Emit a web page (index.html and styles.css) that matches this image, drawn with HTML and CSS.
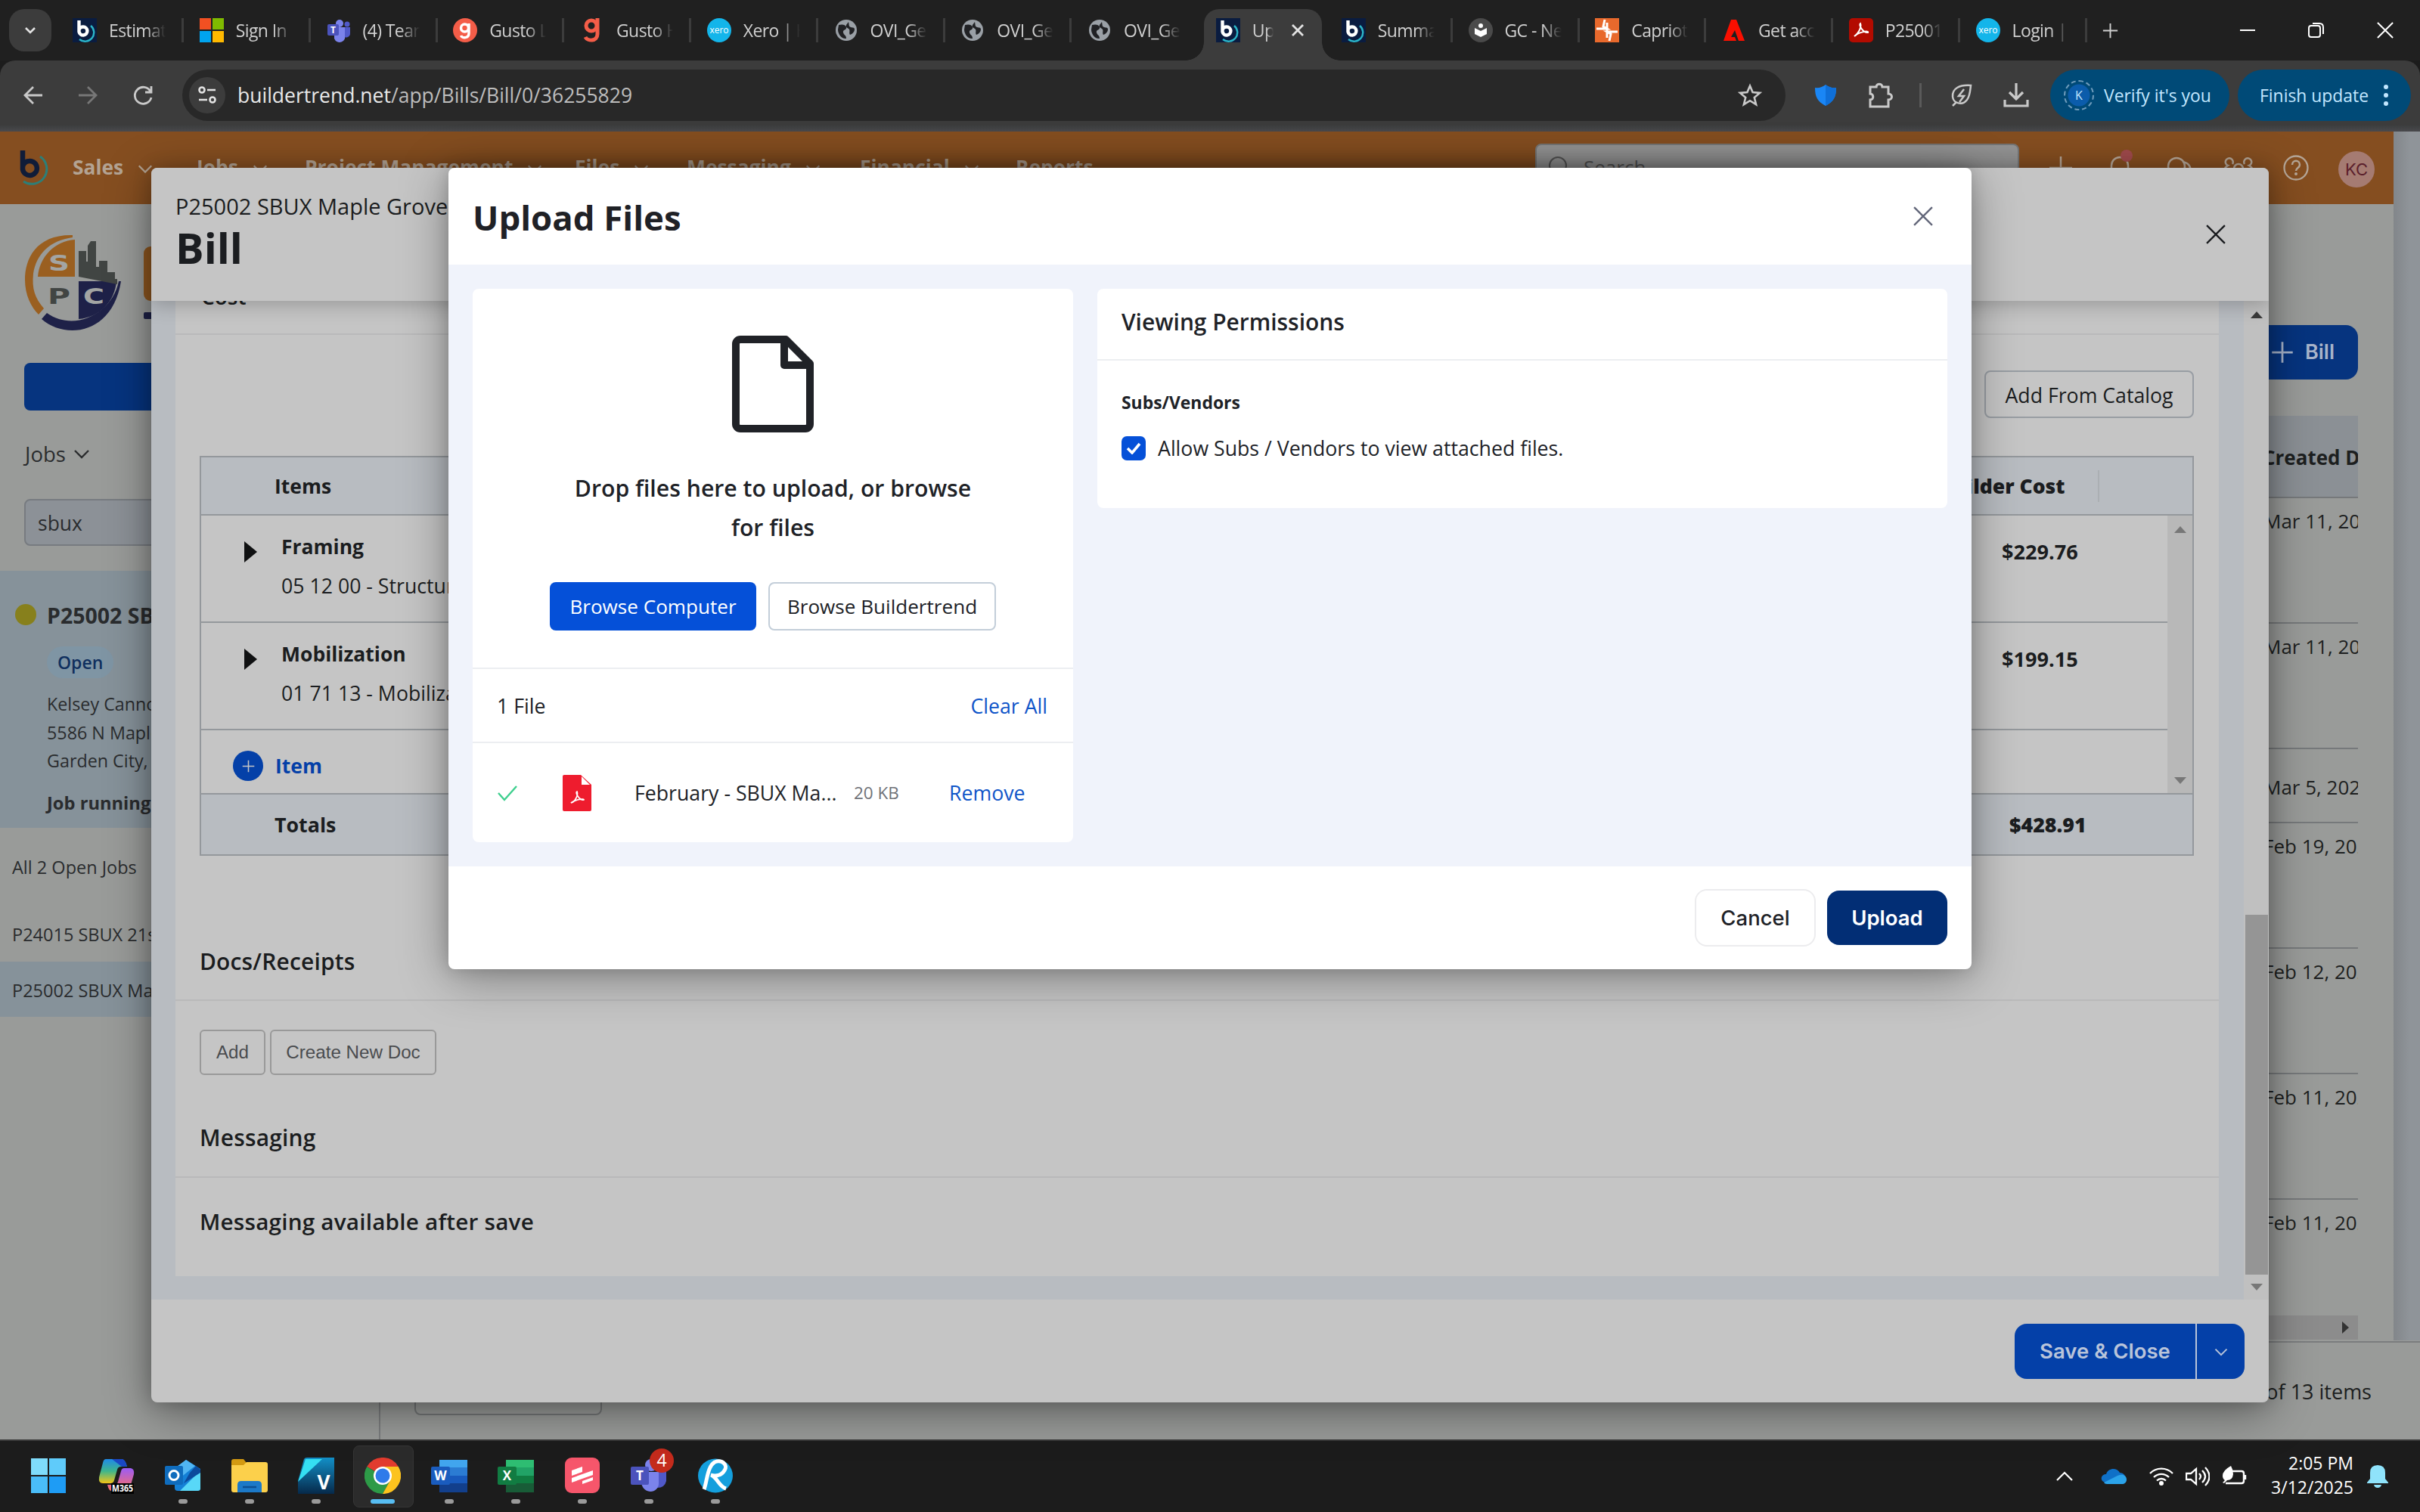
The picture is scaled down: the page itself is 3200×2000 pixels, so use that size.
FILE: index.html
```html
<!DOCTYPE html>
<html lang="en">
<head>
<meta charset="utf-8">
<title>Upload Files</title>
<link rel="stylesheet" href="styles.css">
</head>
<body>
<svg class="defs" width="0" height="0" aria-hidden="true">
  <symbol id="bt" viewBox="0 0 32 32"><rect width="32" height="32" fill="#0a1c40"/><path d="M24 10a11 11 0 0 1-15 18" fill="none" stroke="#2bb6c9" stroke-width="2.4"/><path d="M8.500 3v15a5.500 5.500 0 1 0 5.500-6.500c-2.500 0-5 1.500-5.500 4" fill="none" stroke="#fff" stroke-width="4.400"/></symbol>
  <symbol id="globe" viewBox="0 0 32 32"><circle cx="16" cy="16" r="14" fill="#9aa0a6"/><path d="M6 9c4-1 9-1 10 3s-5 3-4 7 4 3 4 8c-6 1-11-6-11-12zM19 5c1 4 0 6 3 7s5 0 5 3-3 6-6 7c-2-3 1-6-2-8s-4-2-3-5z" fill="#202124"/></symbol>
  <symbol id="xero" viewBox="0 0 32 32"><circle cx="16" cy="16" r="16" fill="#13b5ea"/><text x="16" y="20" font-size="12" text-anchor="middle" fill="#fff" font-family="Open Sans">xero</text></symbol>
  <symbol id="chev" viewBox="0 0 24 24"><path d="M3 8l9 9 9-9" fill="none" stroke="currentColor" stroke-width="2.400"/></symbol>
  <symbol id="x" viewBox="0 0 24 24"><path d="M1 1l22 22M23 1L1 23" fill="none" stroke="currentColor" stroke-width="2.200"/></symbol>
  <symbol id="plus" viewBox="0 0 24 24"><path d="M12 1v22M1 12h22" fill="none" stroke="currentColor" stroke-width="2.200"/></symbol>
</svg>

<div class="screen">
  <div class="tabs">
    <div class="tablist"><svg width="18" height="18"><path d="M3 6l6 6 6-6" fill="none" stroke="#e3e3e3" stroke-width="2.600"/></svg></div>
    <div class="tab"><svg class="fav"><use href="#bt"/></svg><span>Estimates</span></div>
    <div class="tab"><svg class="fav" viewBox="0 0 32 32"><path d="M0 0h15v15H0z" fill="#f25022"/><path d="M17 0h15v15H17z" fill="#7fba00"/><path d="M0 17h15v15H0z" fill="#00a4ef"/><path d="M17 17h15v15H17z" fill="#ffb900"/></svg><span>Sign In |</span></div>
    <div class="tab"><svg class="fav" viewBox="0 0 32 32"><circle cx="17" cy="7" r="5" fill="#7b83eb"/><circle cx="27" cy="8" r="3.500" fill="#5059c9"/><path d="M10 12h14v10a7 7 0 0 1-14 5z" fill="#7b83eb"/><path d="M24 12h7v8a5 5 0 0 1-7 5z" fill="#5059c9"/><rect x="1" y="8" width="15" height="15" rx="2" fill="#4b53bc"/><text x="8.500" y="20" font-size="12" font-weight="700" text-anchor="middle" fill="#fff" font-family="Open Sans">T</text></svg><span>(4) Teams</span></div>
    <div class="tab"><svg class="fav" viewBox="0 0 32 32"><circle cx="16" cy="16" r="16" fill="#f45d48"/><g fill="none" stroke="#fff" stroke-width="3.500"><circle cx="15.500" cy="13" r="5"/><path d="M21 7v13c0 7-9 7-10.500 3"/></g></svg><span>Gusto Lo</span></div>
    <div class="tab"><svg class="fav" viewBox="0 0 32 32"><g fill="none" stroke="#f45d48" stroke-width="5"><circle cx="15" cy="10" r="7"/><path d="M23 0v21c0 10-13 10-16 4"/></g></svg><span>Gusto Ho</span></div>
    <div class="tab"><svg class="fav"><use href="#xero"/></svg><span>Xero | Ho</span></div>
    <div class="tab"><svg class="fav"><use href="#globe"/></svg><span>OVI_Gen</span></div>
    <div class="tab"><svg class="fav"><use href="#globe"/></svg><span>OVI_Gen</span></div>
    <div class="tab nosep"><svg class="fav"><use href="#globe"/></svg><span>OVI_Gen</span></div>
    <div class="tab active"><svg class="fav"><use href="#bt"/></svg><span class="short">Upload</span><svg class="tabx" width="18" height="18" viewBox="0 0 18 18"><path d="M2 2l14 14M16 2L2 16" stroke="#e3e3e3" stroke-width="2.800"/></svg></div>
    <div class="tab"><svg class="fav"><use href="#bt"/></svg><span>Summary</span></div>
    <div class="tab"><svg class="fav" viewBox="0 0 32 32"><circle cx="16" cy="16" r="16" fill="#4a4a4a"/><circle cx="16" cy="10" r="3" fill="#fff"/><path d="M8 13l8 4 8-4v8l-8 4-8-4z" fill="#fff"/></svg><span>GC - New</span></div>
    <div class="tab"><svg class="fav" viewBox="0 0 32 32"><rect width="32" height="32" fill="#e8692c"/><path d="M13 2l-2 9 5 3H2M19 30l2-9-5-3h14M16 6v20" fill="none" stroke="#fff" stroke-width="3"/></svg><span>Capriotti</span></div>
    <div class="tab"><svg class="fav" viewBox="0 0 32 32"><path d="M12 2h7l11 28h-8l-5-14-5 9h5l2 5H2z" fill="#fa0f00"/></svg><span>Get acce</span></div>
    <div class="tab"><svg class="fav" viewBox="0 0 32 32"><rect width="32" height="32" rx="5" fill="#b30b00"/><path d="M7 24c5-3 10-12 8-17-3 2 4 13 10 12 2-3-12-1-18 5z" fill="none" stroke="#fff" stroke-width="2"/></svg><span>P25001 B</span></div>
    <div class="tab"><svg class="fav"><use href="#xero"/></svg><span>Login | X</span></div>
    <div class="newtab"><svg width="21" height="21"><use href="#plus"/></svg></div>
    <div class="wincontrols">
      <svg width="22" height="22"><path d="M1 11h20" stroke="#fff" stroke-width="2"/></svg>
      <svg width="22" height="22"><g fill="none" stroke="#fff" stroke-width="2"><rect x="1" y="5" width="15" height="15" rx="3"/><path d="M6 2h9q5 0 5 5v9"/></g></svg>
      <svg class="winx" width="22" height="22"><use href="#x"/></svg>
    </div>
  </div>

  <div class="toolbar">
    <div class="navbtns">
      <svg width="26" height="26"><path d="M25 13H3M13 2L2 13l11 11" fill="none" stroke="#c9c9c9" stroke-width="2.800"/></svg>
      <svg width="26" height="26"><path d="M1 13h22M13 2l11 11-11 11" fill="none" stroke="#777" stroke-width="2.800"/></svg>
      <svg width="28" height="28"><path d="M24 9A11 11 0 1 0 25 17M25 2v8h-8" fill="none" stroke="#c9c9c9" stroke-width="2.800"/></svg>
    </div>
    <div class="omnibox">
      <div class="siteinfo"><svg width="26" height="26"><g fill="none" stroke="#e3e3e3" stroke-width="2.600"><circle cx="6" cy="6" r="3.500"/><path d="M13 6h11M2 19h11"/><circle cx="20" cy="19" r="3.500"/></g></svg></div>
      <div class="url">buildertrend.net<span>/app/Bills/Bill/0/36255829</span></div>
      <svg class="star" width="32" height="32"><path d="M16 3.500l3.600 8.600 9.400.8-7.200 6.100 2.300 9.200-8.100-5-8.100 5 2.300-9.200L3 12.900l9.400-.8z" fill="none" stroke="#c9c9c9" stroke-width="2.600"/></svg>
    </div>
    <div class="exts">
      <svg width="32" height="32"><path d="M16 2q6 5 14 4c0 12-3 18-14 24C5 24 2 18 2 6q8 1 14-4z" fill="#1a86f5"/><path d="M16 2q6 5 14 4c0 12-3 18-14 24z" fill="#0f6fd8"/></svg>
      <svg width="34" height="36"><path d="M3 7h8c0-5 8-5 8 0h8v9c6 0 6 8 0 8v9H3v-9c5 0 5-8 0-8z" fill="none" stroke="#c9c9c9" stroke-width="3"/></svg>
      <i class="vsep"></i>
      <svg width="34" height="34"><path d="M29 4C14 3 4 8 5 19c1 9 13 12 19 4 4-5 4-11 5-19zM5 31l5-5M20 9l-7 9h7l-6 8" fill="none" stroke="#c9c9c9" stroke-width="2.500"/></svg>
      <svg width="34" height="34"><path d="M17 1v20M8 13l9 9 9-9M2 23v8h30v-8" fill="none" stroke="#c9c9c9" stroke-width="3.200"/></svg>
    </div>
    <div class="pill verify"><div class="vk">K</div>Verify it's you</div>
    <div class="pill finish">Finish update<svg width="8" height="30"><circle cx="4" cy="4" r="3" fill="#c2e7ff"/><circle cx="4" cy="15" r="3" fill="#c2e7ff"/><circle cx="4" cy="26" r="3" fill="#c2e7ff"/></svg></div>
  </div>
  <div class="edge"></div>

  <div class="page">
    <div class="app">
      <div class="apphead">
        <svg class="blogo" width="40" height="48"><path d="M28 9a18 18 0 0 1-22 33" fill="none" stroke="#2c7f78" stroke-width="3"/><path d="M5 1v25a9.500 9.500 0 1 0 9.500-11c-4 0-8 2-9.500 7" fill="none" stroke="#101c38" stroke-width="6.500"/></svg>
        <nav>
          <span class="n1">Sales<svg><use href="#chev"/></svg></span><span class="n2">Jobs<svg><use href="#chev"/></svg></span><span class="n3">Project Management<svg><use href="#chev"/></svg></span><span class="n4">Files<svg><use href="#chev"/></svg></span><span class="n5">Messaging<svg><use href="#chev"/></svg></span><span class="n6">Financial<svg><use href="#chev"/></svg></span><span>Reports</span>
        </nav>
        <div class="search"><svg width="26" height="28"><circle cx="12" cy="12" r="11" fill="none" stroke="#555" stroke-width="2"/><path d="M20 20l6 7" stroke="#555" stroke-width="2"/></svg>Search</div>
        <div class="headicons">
          <svg width="30" height="30"><path d="M15 0v30M0 15h30" stroke="currentColor" stroke-width="2.500"/></svg>
          <svg width="34" height="44"><g fill="none" stroke="currentColor" stroke-width="2.500"><path d="M6 32V22a11 11 0 0 1 22 0v10H6"/></g><circle cx="26" cy="9" r="8" fill="#a04a4c"/></svg>
          <svg width="36" height="34"><g fill="none" stroke="currentColor" stroke-width="2.500"><circle cx="14" cy="15" r="11"/><path d="M22 9c7 1 12 6 10 14"/></g></svg>
          <svg width="40" height="34"><g fill="none" stroke="currentColor" stroke-width="2.500"><path d="M12 12a5 5 0 1 0-6 2q-4 2-5 6M28 12a5 5 0 1 1 6 2q4 2 5 6"/><circle cx="20" cy="18" r="6"/></g></svg>
          <svg width="34" height="34"><circle cx="17" cy="17" r="15.500" fill="none" stroke="currentColor" stroke-width="2.300"/><path d="M12 13c0-7 10-7 10 0 0 4-5 4-5 8" fill="none" stroke="currentColor" stroke-width="2.500"/><circle cx="17" cy="25" r="2" fill="currentColor"/></svg>
          <div class="avatar">KC</div>
        </div>
      </div>
      <div class="appbody">
        <aside>
          <svg class="spc" width="200" height="160"><path d="M96 21C48 20 33 52 33 80c0 20 8 36 18 46l7-8C46 104 42 92 44 72 48 46 66 28 96 24z" fill="#9a5f20"/><path d="M99 27v49H50c2-26 22-47 49-49z" fill="#9a5f20"/><path d="M62 124l-7 8c32 28 94 20 105-50h-3c-8 42-58 68-95 42z" fill="#1e2148"/><path d="M104 82h50c-2 26-22 48-50 50z" fill="#1e2148"/><path d="M104 76V42h10v14h2V35l4-6h7v34h4v-8h11v15h10v9h3v-3 10z" fill="#414543"/><g font-family="DejaVu Sans" font-weight="700" font-size="28" text-anchor="middle"><text x="78" y="68" fill="#a3a5a3" textLength="28" lengthAdjust="spacingAndGlyphs">S</text><text x="78" y="112" fill="#414543" textLength="30" lengthAdjust="spacingAndGlyphs">P</text><text x="124" y="112" fill="#a3a5a3" textLength="28" lengthAdjust="spacingAndGlyphs">C</text></g><rect x="190" y="36" width="30" height="72" rx="9" fill="#8f5720"/><rect x="190" y="123" width="30" height="9" rx="2" fill="#1e2148"/></svg>
          <div class="bluebtn"></div>
          <div class="jobsdd">Jobs<svg width="24" height="24"><use href="#chev"/></svg></div>
          <div class="jobinput">sbux</div>
          <div class="jobcard">
            <i class="dot"></i>
            <div class="jobinfo"><b class="jt">P25002 SBUX</b><span class="openpill">Open</span><p>Kelsey Cannon</p><p>5586 N Maple</p><p>Garden City, ID</p><b class="jr">Job running</b></div>
          </div>
          <div class="all">All 2 Open Jobs</div>
          <div class="j1">P24015 SBUX 21st</div>
          <div class="j2">P25002 SBUX Map</div>
        </aside>
        <main>
          <div class="addbill"><svg width="30" height="30"><use href="#plus"/></svg>Bill</div>
          <div class="grid">
            <div class="gh">Created Date</div>
            <div class="gr a">Mar 11, 2025</div><div class="gr a">Mar 11, 2025</div><div class="gr b">Mar 5, 2025</div><div class="gr a">Feb 19, 2025</div><div class="gr a">Feb 12, 2025</div><div class="gr a">Feb 11, 2025</div><div class="gr a last">Feb 11, 2025</div>
            <div class="hscroll"><svg width="9" height="16"><path d="M0 0l9 8-9 8z" fill="#333"/></svg></div>
          </div>
        </main>
      </div>
      <div class="pagefoot"><div class="selbox"></div><span>of 13 items</span></div>
    </div>
    <div class="gutter"></div>
  </div>

  <section class="bill">
    <header><div class="bjob">P25002 SBUX Maple Grove</div><div class="btitle">Bill</div><svg class="bx" width="26" height="26"><use href="#x"/></svg></header>
    <div class="bscroll">
      <div class="bcontent">
        <div class="cost"><span>Cost</span></div>
        <div class="catrow"><div class="catbtn">Add From Catalog</div></div>
        <div class="tbl">
          <div class="th"><span>Items</span><b>Builder Cost</b><i></i></div>
          <div class="tbody">
            <div class="trows">
              <div class="tr"><svg width="18" height="28"><path d="M0 0l17 14L0 28z" fill="#101112"/></svg><div class="tx"><b>Framing</b><span>05 12 00 - Structural</span></div><b class="amt">$229.76</b></div>
              <div class="tr"><svg width="18" height="28"><path d="M0 0l17 14L0 28z" fill="#101112"/></svg><div class="tx"><b>Mobilization</b><span>01 71 13 - Mobilization</span></div><b class="amt">$199.15</b></div>
              <div class="additem"><div class="circ"><svg width="17" height="17"><use href="#plus"/></svg></div>Item</div>
            </div>
            <div class="tscroll"><svg width="16" height="9"><path d="M0 9l8-9 8 9z" fill="#777"/></svg><svg width="16" height="9"><path d="M0 0l8 9 8-9z" fill="#777"/></svg></div>
          </div>
          <div class="tf"><span>Totals</span><b>$428.91</b></div>
        </div>
        <h3 class="docs">Docs/Receipts</h3>
        <div class="docbtns"><div class="dadd">Add</div><div class="dnew">Create New Doc</div></div>
        <h3 class="msg">Messaging</h3>
        <div class="after">Messaging available after save</div>
      </div>
      <div class="vscroll"><svg width="16" height="9"><path d="M0 9l8-9 8 9z" fill="#3a3a3a"/></svg><div class="thumb"></div><svg width="16" height="9"><path d="M0 0l8 9 8-9z" fill="#777"/></svg></div>
    </div>
    <footer><div class="save">Save &amp; Close</div><div class="savedd"><svg width="20" height="20"><use href="#chev"/></svg></div></footer>
  </section>

  <section class="upload">
    <header>Upload Files<svg width="26" height="26"><use href="#x"/></svg></header>
    <div class="ubody">
      <div class="ucard left">
        <div class="drop">
          <svg width="108" height="128"><g fill="none" stroke="#202227" stroke-width="10" stroke-linejoin="round"><path d="M5 11a6 6 0 0 1 6-6h60l32 32v80a6 6 0 0 1-6 6H11a6 6 0 0 1-6-6z"/><path d="M69 5v34h34"/></g></svg>
          <p>Drop files here to upload, or browse<br>for files</p>
          <div class="bbtns"><div class="prim">Browse Computer</div><div class="sec">Browse Buildertrend</div></div>
        </div>
        <div class="count"><span>1 File</span><a>Clear All</a></div>
        <div class="file">
          <svg width="28" height="22"><path d="M2 11l8 9L26 2" fill="none" stroke="#3ecf8e" stroke-width="2.400"/></svg>
          <svg class="pdf" width="38" height="48"><path d="M2 0h22l14 13v33q0 2-2 2H2q-2 0-2-2V2q0-2 2-2z" fill="#ee1c2e"/><path d="M25 2l11 11H25z" fill="#fff"/><path d="M11 37c5-1 10-10 8-15-3 1 3 12 9 11 1-2-11-1-17 4z" fill="none" stroke="#fff" stroke-width="1.700"/></svg>
          <span class="fname">February - SBUX Ma...</span><span class="size">20 KB</span><a>Remove</a>
        </div>
      </div>
      <div class="ucard right">
        <div class="vp">Viewing Permissions</div>
        <div class="sv">Subs/Vendors</div>
        <div class="allow"><i><svg width="20" height="16"><path d="M2 8l6 6L18 2" fill="none" stroke="#fff" stroke-width="3.600"/></svg></i>Allow Subs / Vendors to view attached files.</div>
      </div>
    </div>
    <footer><div class="cancel">Cancel</div><div class="up">Upload</div></footer>
  </section>

  <div class="taskbar">
    <div class="apps">
      <div class="ti"><svg viewBox="0 0 48 48"><path d="M1 1h22v22H1z" fill="#7fdcfb"/><path d="M25 1h22v22H25z" fill="#5fcbfa"/><path d="M1 25h22v22H1z" fill="#4abdf8"/><path d="M25 25h22v22H25z" fill="#1e9cf5"/></svg></div>
      <div class="ti"><svg viewBox="0 0 48 48"><defs><linearGradient id="ga" x1="0" y1="0" x2="0" y2="1"><stop offset="0" stop-color="#1f8ae8"/><stop offset=".5" stop-color="#3fb68b"/><stop offset="1" stop-color="#f3c416"/></linearGradient><linearGradient id="gb" x1="0" y1="0" x2="0" y2="1"><stop offset="0" stop-color="#9b5cf6"/><stop offset="1" stop-color="#ff6f61"/></linearGradient></defs><path d="M10 2h22q4 2 6 10h-8q-4 0-5 4l-4 14q-1 4-5 4H6Q0 34 1 26L6 7q1-5 4-5z" fill="url(#ga)"/><path d="M18 2h14q4 1 6 10h-7z" fill="#1a48c4"/><path d="M34 14h9q5 1 4 8l-4 14q-2 8-8 8H17q-3 0-5-8h8q5 0 6-4l4-14q1-4 4-4z" fill="url(#gb)"/><rect x="17" y="34" width="30" height="14" fill="#000"/><text x="32" y="45" font-size="12" font-weight="700" fill="#fff" text-anchor="middle" font-family="Open Sans" textLength="28" lengthAdjust="spacingAndGlyphs">M365</text></svg></div>
      <div class="ti run"><svg viewBox="0 0 48 48"><path d="M28 3L47 15v25q0 4-4 4H17q-4 0-4-4V15z" fill="#1480d6"/><path d="M28 3l12 8-20 16-7-5v-8z" fill="#50b5f2"/><path d="M47 17v24q0 3-4 3H20z" fill="#58d8f8"/><path d="M33 20l8-9 6 5v4L25 34z" fill="#0c4a9c"/><rect y="11" width="24" height="25" rx="2" fill="#0f6cbd"/><circle cx="12" cy="23.500" r="6" fill="none" stroke="#fff" stroke-width="3"/></svg></div>
      <div class="ti run"><svg viewBox="0 0 48 48"><path d="M0 5q0-3 3-3h13l4 5-4 10H0z" fill="#d39a12"/><path d="M0 10h16l4-4h25q3 0 3 3v34q0 3-3 3H3q-3 0-3-3z" fill="#fcd04b"/><path d="M8 46V36q0-5 5-5h22q5 0 5 5v10z" fill="#1c79c8"/><path d="M15 39h18" stroke="#0d4f92" stroke-width="2.500"/></svg></div>
      <div class="ti run"><svg viewBox="0 0 48 48"><defs><linearGradient id="gv" x1="0" y1="0" x2="0" y2="1"><stop offset="0" stop-color="#1390c8"/><stop offset="1" stop-color="#06294a"/></linearGradient></defs><path d="M8 2Q9 0 12 0h36v48H0V30z" fill="url(#gv)"/><path d="M10 2h22L0 32z" fill="#35dff2"/><text x="34" y="42" font-size="27" font-weight="700" fill="#fff" text-anchor="middle" font-family="Open Sans" textLength="17" lengthAdjust="spacingAndGlyphs">V</text></svg></div>
      <div class="ti run cur"><svg viewBox="0 0 48 48"><path d="M24 24L3.200 12A24 24 0 0 1 44.800 12z" fill="#e23b2e"/><path d="M24 24h-1L3.200 12A24 24 0 0 0 24 48l10-18z" fill="#2d9a47"/><path d="M24 12h20.800A24 24 0 0 1 24 48l10-18z" fill="#fcc31e"/><circle cx="24" cy="24" r="12" fill="#fff"/><circle cx="24" cy="24" r="9.500" fill="#2f7bea"/></svg></div>
      <div class="ti run"><svg viewBox="0 0 48 48"><path d="M11 3h37v11H11z" fill="#41a5ee"/><path d="M11 13h37v11H11z" fill="#2b7cd3"/><path d="M11 24h37v11H11z" fill="#185abd"/><path d="M11 34h37v12H11z" fill="#123f8c"/><rect y="12" width="25" height="24" rx="2" fill="#1a5cbe"/><text x="12.500" y="30" font-size="17" font-weight="700" fill="#fff" text-anchor="middle" font-family="Open Sans">W</text></svg></div>
      <div class="ti run"><svg viewBox="0 0 48 48"><path d="M11 3h37v11H11z" fill="#2ebd72"/><path d="M11 13h37v11H11z" fill="#21a366"/><path d="M11 24h37v11H11z" fill="#107c41"/><path d="M11 34h37v12H11z" fill="#185c37"/><rect y="12" width="25" height="24" rx="2" fill="#117c42"/><text x="12.500" y="30" font-size="17" font-weight="700" fill="#fff" text-anchor="middle" font-family="Open Sans">X</text></svg></div>
      <div class="ti run"><svg viewBox="0 0 48 48"><rect x="1" width="46" height="47" rx="9" fill="#f6566b"/><path d="M10 17l14-5v7l-14 5zM10 27l28-10v6L10 33zM24 31l14-5v4l-14 5z" fill="#fff"/></svg></div>
      <div class="ti run"><svg viewBox="0 0 48 48"><circle cx="27" cy="10" r="8" fill="#7b83eb"/><path d="M34 19h13v12q-2 9-12 9z" fill="#5059c9"/><path d="M14 19h23v15c0 14-20 15-23 0z" fill="#7b83eb"/><rect y="12" width="24" height="24" rx="2" fill="#4b53bc"/><text x="12" y="30" font-size="17" font-weight="700" fill="#fff" text-anchor="middle" font-family="Open Sans">T</text></svg><em>4</em></div>
      <div class="ti run"><svg viewBox="0 0 48 48"><ellipse cx="24" cy="24" rx="23" ry="22.500" fill="#149fdd"/><path d="M9 42c4-10 4-30 14-36 10-4 18 4 13 11-4 7-12 8-18 6 8 2 10 15 20 18" fill="none" stroke="#fff" stroke-width="5"/></svg></div>
    </div>
    <div class="tray">
      <svg width="22" height="14"><path d="M1 12L11 2l10 10" fill="none" stroke="#fff" stroke-width="2.200"/></svg>
      <svg width="34" height="24"><path d="M8 20C-2 20-1 9 7 9c2-8 14-10 18-2 9 0 11 13 2 14z" fill="#0f70c7"/><path d="M4 20l18-9c7-3 12 0 12 5 0 4-3 6-6 6H8q-3 0-4-2z" fill="#2ba3ea"/></svg>
      <svg width="32" height="26"><g fill="none" stroke="#fff" stroke-width="2.300"><path d="M1 9a21 21 0 0 1 30 0M6 14a14 14 0 0 1 20 0M10 18.500a8.500 8.500 0 0 1 12 0"/></g><circle cx="16" cy="22" r="3" fill="#fff"/></svg>
      <svg width="32" height="28"><g fill="none" stroke="#fff" stroke-width="2.300"><path d="M1 10h6l7-6v20l-7-6H1zM18 10q4 4 0 8M22 6q8 8 0 16M26 2q11 12 0 24"/></g></svg>
      <svg width="34" height="28"><path d="M14 7h12q3 0 3 3v10q0 3-3 3H5M31 12v6" fill="none" stroke="#fff" stroke-width="2.400"/><path d="M12 0Q1 6 1 13q0 4 3 6l-3 3 2 1 4-4q7 0 8-8 0-6-3-11z" fill="#fff"/></svg>
      <div class="clock">2:05 PM<br>3/12/2025</div>
      <svg width="28" height="32"><path d="M14 1q10 0 10 10v8l4 5v1H0v-1l4-5v-8Q4 1 14 1zM9 27h10q-1 4-5 4t-5-4z" fill="#8fe3fb"/></svg>
    </div>
  </div>
</div>
</body>
</html>
```
FILE: styles.css
```css
*{box-sizing:border-box;margin:0;padding:0}
body{width:3200px;height:2000px;overflow:hidden;background:#1c1c1c;font-family:"Open Sans","Noto Sans",sans-serif;color:#202227}
svg{display:block;flex:none}
i,em{font-style:normal}
.defs{position:absolute}
.screen{position:relative;width:3200px;height:2000px;display:flex;flex-direction:column;overflow:hidden}

.tabs{height:80px;background:#202020;display:flex;flex:none;position:relative;z-index:1}
.tablist{width:56px;height:56px;margin:12px 8px 0 12px;border-radius:20px;background:#3c3c3c;display:flex;align-items:center;justify-content:center}
.tab{width:167.75px;height:80px;padding:0 24px 0 20px;display:flex;align-items:center;gap:16px;flex:none;background:linear-gradient(#3c3c3c,#3c3c3c) 164px 24px/3px 32px no-repeat}
.fav{width:32px;height:32px}
.tab span{width:75px;overflow:hidden;white-space:nowrap;font-size:23px;line-height:40px;letter-spacing:-.6px;color:#d0d0d0;-webkit-mask-image:linear-gradient(90deg,#000 66%,transparent);mask-image:linear-gradient(90deg,#000 66%,transparent)}
.tab.nosep{background:none}
.tab.active{background:#3c3c3c;width:156px;height:68px;margin:12px 6px 0 6px;padding:0 0 12px 16px;border-radius:20px 20px 0 0;position:relative}
.tab.active::before,.tab.active::after{content:"";position:absolute;bottom:0;width:24px;height:24px}
.tab.active::before{left:-24px;background:radial-gradient(circle at 0 0,transparent 23.5px,#3c3c3c 24px)}
.tab.active::after{right:-24px;background:radial-gradient(circle at 100% 0,transparent 23.5px,#3c3c3c 24px)}
.tab .short{width:28px}
.tabx{margin-left:7px}
.newtab{width:80px;display:flex;align-items:center;justify-content:center;color:#d0d0d0;margin-left:-10px}
.wincontrols{margin-left:auto;display:flex;gap:69px;align-items:center;padding-right:35px}
.winx{color:#fff}

.toolbar{height:86px;background:#3c3c3c;border-radius:20px 20px 0 0;display:flex;align-items:flex-start;padding-top:12px;flex:none}
.navbtns{width:241px;height:68px;display:flex;align-items:center;gap:46px;padding-left:31px}
.omnibox{width:2120px;height:68px;border-radius:34px;background:#282828;display:flex;align-items:center;padding:0 31px 0 9px}
.siteinfo{width:48px;height:48px;border-radius:50%;background:#3c3c3c;display:flex;align-items:center;justify-content:center}
.url{margin-left:16px;font-size:26.5px;color:#e8e8e8;flex:1}
.url span{color:#bdbdbd}
.exts{width:350px;height:68px;display:flex;align-items:center;padding-left:37px}
.exts svg:nth-child(2){margin-left:40px}
.vsep{width:3px;height:32px;background:#5a5a5a;margin:0 36px 0 34px}
.exts svg:nth-child(5){margin-left:38px}
.pill{height:68px;border-radius:34px;background:#004a77;color:#c2e7ff;font-size:22.900px;display:flex;align-items:center;white-space:nowrap}
.verify{width:237px;padding-left:18px;margin-right:11px;gap:13px}
.vk{width:40px;height:40px;border-radius:50%;border:2px dashed #6f9cbc;background:radial-gradient(circle,#0b5cab 0 14px,transparent 15px);font-size:16px;display:flex;align-items:center;justify-content:center}
.finish{width:229px;padding-left:29px;gap:19px}
.edge{height:8px;background:linear-gradient(#3c3e3e,#4a4a4d);flex:none}

.page{height:1730px;flex:none;background:#999b99;position:relative}
.app{width:3200px;height:1730px}
.gutter{position:absolute;left:3165px;top:0;width:35px;height:1599px;background:linear-gradient(90deg,#82868a,#8f9499 60%)}
.apphead{height:96px;background:#854e20;display:flex;align-items:center;color:#b3a393;width:3165px}
.blogo{margin:-1px 31px 0 25px}
.apphead nav{display:flex;font-size:26.400px;font-weight:700;width:1934px;margin-top:-3px}
.apphead nav span{display:flex;align-items:center;white-space:nowrap}
.apphead nav svg{width:22px;height:22px;margin:4px 0 0 18px}
.n1{width:164px}.n2{width:143px}.n3{width:357px}.n4{width:148px}.n5{width:229px}.n6{width:206px}
.search{width:640px;height:62px;background:#959595;border:2px solid #777;border-radius:8px;display:flex;align-items:center;gap:20px;padding-left:16px;font-size:26px;color:#555;margin-top:-2px}
.headicons{display:flex;align-items:center;margin-left:40px;color:#b5a697}
.headicons svg:nth-child(2){margin-left:46px;margin-top:-6px}
.headicons svg:nth-child(3){margin-left:44px}
.headicons svg:nth-child(4){margin-left:40px}
.headicons svg:nth-child(5){margin-left:39px}
.avatar{width:48px;height:48px;border-radius:50%;background:#a57b72;color:#5b1f2c;font-size:22px;font-family:Inter,sans-serif;display:flex;align-items:center;justify-content:center;margin-left:39px;margin-top:4px}

.appbody{height:1504px;display:flex;width:3165px}
aside{width:500px;height:1504px;color:#2a2c2e}
.spc{margin-top:20px;height:160px}
.bluebtn{height:63px;margin:30px 0 0 32px;background:#06347f;border-radius:8px}
.jobsdd{height:56px;margin:29px 0 0 33px;display:flex;align-items:center;gap:9px;font-size:27.500px}
.jobinput{height:62px;margin:32px 0 0 32px;padding-left:16px;border:2px solid #777b80;border-radius:8px;background:#8c9197;font-size:26.500px;line-height:60px}
.jobcard{height:340px;margin-top:33px;background:#86929a;display:flex;padding:44px 0 0 20px;gap:14px;white-space:nowrap}
.dot{width:28px;height:28px;border-radius:50%;background:#87801c}
.jobinfo{display:flex;flex-direction:column;align-items:flex-start;margin-top:-9px}
.jt{font-size:28.500px;line-height:48px}
.openpill{height:42px;border-radius:21px;background:#7f95a4;color:#0f2f5e;font-size:23px;font-weight:600;line-height:43px;padding:0 14px;margin:17px 0 16px}
.jobinfo p{font-size:23.300px;line-height:37.500px}
.jr{font-size:23.700px;line-height:40px;margin-top:16px}
.all,.j1,.j2{font-size:23.500px;padding-left:16px;white-space:nowrap}
.all{height:104px;line-height:104px}
.j1{height:73px;line-height:74px}
.j2{height:73px;line-height:76px;background:#86929a}
main{flex:1;padding:160px 47px 0 2300px;display:flex;flex-direction:column;min-width:0}
.addbill{height:72px;background:#06347f;border-radius:16px;color:#a8b4ca;font:600 27px/72px Inter,sans-serif;display:flex;align-items:center;gap:15px;padding-left:203px}
.grid{margin-top:48px;overflow:hidden;color:#1d1f20;font-size:26px;white-space:nowrap}
.gh{height:109px;background:#8b9095;border-bottom:2px solid #76797b;padding-left:192px;line-height:111px;font-weight:700;font-size:26px}
.gr{height:166px;border-bottom:2px solid #76797b;padding:10px 0 0 193px;line-height:40px}
.gr.b{height:98px;padding-top:30px}
.gr.last{height:153px;border:0}
.hscroll{height:32px;background:#8c8c8c;display:flex;justify-content:flex-end;align-items:center;padding-right:12px}
.pagefoot{height:130px;position:relative;width:3200px;display:flex;justify-content:flex-end;font-size:27px;padding:43px 64px 0 0;line-height:48px;color:#1d1f20;background:linear-gradient(#7b7d7e,#7b7d7e) 502px 0/2698px 2px no-repeat}
.pagefoot::before{content:"";position:absolute;left:501px;top:0;width:2px;height:130px;background:#7b7d7e}
.selbox{position:absolute;left:548px;top:35px;width:248px;height:63px;border:2px solid #747677;border-radius:8px}

.bill{position:absolute;z-index:2;left:200px;top:222px;width:2800px;height:1633px;background:#c5c5c5;border-radius:8px;box-shadow:0 12px 60px rgba(0,0,0,.4),0 0 24px rgba(0,0,0,.18);display:flex;flex-direction:column;overflow:hidden;color:#1b1d20}
.bill header{height:176px;flex:none;padding:31px 32px;position:relative;box-shadow:0 6px 24px rgba(0,0,0,.22);z-index:1;background:#c5c5c5}
.bjob{font-size:29px;line-height:40px}
.btitle{font-size:56px;font-weight:700;line-height:72px;margin-top:-2px}
.bx{position:absolute;right:57px;top:75px}
.bscroll{height:1321px;display:flex;background:#b8bcc1;padding-left:32px;flex:none}
.bcontent{width:2702px;height:1290px;background:#c5c5c5;padding:0 33px 0 32px}
.cost{height:45px;margin:0 -33px 0 -32px;padding-left:34px;border-bottom:2px solid #b9b9ba;font-size:28px;font-weight:600;line-height:40px;display:flex;align-items:flex-start}
.cost span{display:block;margin-top:-26px}
.catrow{display:flex;justify-content:flex-end;height:160px;padding-top:47px}
.catbtn{width:277px;height:63px;border:2px solid #989da3;border-radius:8px;font-size:26.700px;line-height:61px;text-align:center}
.tbl{border:2px solid #94989c;height:529px;display:flex;flex-direction:column}
.th{height:77px;background:#b8bcc1;border-bottom:2px solid #94989c;display:flex;align-items:center;font-weight:700;font-size:26.500px;padding-left:97px}
.th span{width:2202px}
.th b{width:182px;white-space:nowrap}
.th i{width:2px;height:42px;background:#abafb3;margin-left:27px}
.tbody{height:367px;display:flex}
.trows{width:2602px}
.tr{height:142px;border-bottom:2px solid #94989c;display:flex;padding-left:57px}
.tr svg{margin-top:34px}
.tx{display:flex;flex-direction:column;width:2306px;padding:21px 0 0 31px;font-size:26.700px}
.tx b{line-height:40px;font-size:26.500px}
.tx span{line-height:40px;margin-top:12px}
.amt{font-size:27.100px;padding-top:29px}
.additem{display:flex;align-items:center;gap:16px;color:#0440a8;font-weight:700;font-size:26.500px;height:94px;padding-left:42px}
.circ{width:40px;height:40px;border-radius:50%;background:#0440a8;color:#c5c5c5;display:flex;align-items:center;justify-content:center}
.tscroll{width:33px;background:#b8b8b8;display:flex;flex-direction:column;justify-content:space-between;align-items:center;padding:14px 0 12px}
.tf{height:81px;border-top:2px solid #94989c;background:#b8bcc1;display:flex;align-items:center;font-weight:700;font-size:26.800px;padding-left:97px}
.tf span{width:2294px}
.docs,.msg{margin:0 -33px 0 -32px;padding-left:32px;font-size:29.900px;font-weight:600;border-bottom:2px solid #b9b9ba;letter-spacing:.2px}
.docs{height:192px;line-height:40px;padding-top:120px}
.docbtns{display:flex;gap:6px;height:99px;padding-top:38px}
.docbtns div{height:60px;border:2px solid #999;border-radius:6px;font:24.200px/56px "Liberation Sans",sans-serif;color:#4a4c4f;text-align:center}
.dadd{width:87px}
.dnew{width:220px}
.msg{height:135px;line-height:40px;padding-top:62px}
.after{font-size:29.700px;font-weight:600;line-height:40px;padding-top:38px;letter-spacing:.2px}
.vscroll{width:33px;margin-left:33px;background:#c0c0c0;display:flex;flex-direction:column;align-items:center;padding:14px 0 11px}
.thumb{width:30px;height:476px;background:#959595;margin:789px 0 12px}
.bill footer{height:136px;display:flex;justify-content:flex-end;padding:32px 32px 0}
.save{width:239px;height:73px;background:#0440a8;border-radius:16px 0 0 16px;color:#b9c4da;font:600 27.500px/73px Inter,sans-serif;text-align:center}
.savedd{width:65px;height:73px;background:#0440a8;border-left:2px solid #b9c4da;border-radius:0 16px 16px 0;color:#b9c4da;display:flex;align-items:center;justify-content:center}

.upload{position:absolute;z-index:3;left:593px;top:222px;width:2014px;height:1060px;background:#fff;border-radius:8px;box-shadow:0 10px 64px rgba(0,0,0,.38),0 0 20px rgba(0,0,0,.15);display:flex;flex-direction:column}
.upload header{height:128px;padding:2px 51px 0 32px;display:flex;align-items:center;justify-content:space-between;font-size:45.500px;font-weight:700;color:#1f2126}
.upload header svg{color:#63677a;margin-top:-2px}
.ubody{height:796px;background:#f0f3fb;padding:32px;display:flex;gap:32px;align-items:flex-start}
.ucard{background:#fff;border-radius:8px}
.left{width:794px;height:732px}
.drop{height:501px;display:flex;flex-direction:column;align-items:center;padding-top:62px}
.drop p{font-size:30.200px;font-weight:600;line-height:52px;margin-top:48px;text-align:center}
.bbtns{display:flex;gap:16px;margin-top:46px}
.bbtns div{height:64px;border-radius:8px;font-size:26.100px;line-height:65px;text-align:center}
.prim{width:273px;background:#0550d8;color:#fff}
.bbtns .sec{width:301px;border:2px solid #c3ced9;line-height:61px}
.count{height:100px;border-top:2px solid #eceef1;border-bottom:2px solid #eceef1;padding:0 34px 0 32px;display:flex;align-items:center;justify-content:space-between;font-size:26.700px}
.upload a{color:#0f55c9}
.file{height:131px;display:flex;align-items:center;padding-left:32px;font-size:26.700px}
.pdf{margin-left:59px}
.fname{width:290px;margin-left:57px;white-space:nowrap}
.size{font-size:22.500px;color:#6f7278;width:126px}
.right{width:1124px;height:290px}
.vp{height:95px;border-bottom:2px solid #eceef1;padding-left:32px;font-size:29.900px;font-weight:600;line-height:88px}
.sv{font-size:22.900px;font-weight:700;line-height:40px;padding:36px 0 0 32px}
.allow{display:flex;align-items:center;gap:16px;font-size:26.700px;line-height:40px;padding:20px 0 0 32px}
.allow i{width:32px;height:32px;border-radius:7px;background:#0550d8;display:flex;align-items:center;justify-content:center}
.upload footer{height:136px;display:flex;justify-content:flex-end;gap:15px;padding:30px 32px 0}
.upload footer div{font:500 27.500px/72px Inter,sans-serif;text-align:center;border-radius:16px}
.upload footer .cancel{width:160px;height:76px;border:2px solid #ececee}
.upload footer .up{width:159px;height:72px;background:#022e75;color:#fff;margin-top:2px;font-weight:600}

.taskbar{height:96px;background:#1c1c1c;border-top:2px solid #3a3a3a;display:flex;justify-content:space-between;flex:none;position:relative;z-index:1}
.apps{display:flex;padding-left:22px}
.ti{width:88px;height:94px;display:flex;justify-content:center;padding-top:22px;position:relative}
.ti:first-child{padding-right:4px}
.ti svg{width:48px;height:48px}
.run::after{content:"";position:absolute;top:77px;left:38px;width:12px;height:6px;border-radius:3px;background:#9a9a9a}
.cur::before{content:"";position:absolute;left:5px;top:6px;width:78px;height:80px;border-radius:8px;background:#2b2b2b;border:1px solid #363636}
.cur svg{position:relative}
.cur::after{left:28px;width:32px;background:#57bdf3}
.ti em{position:absolute;left:45px;top:10px;width:32px;height:32px;border-radius:50%;background:#c42b1c;color:#fff;font-size:23px;line-height:31px;text-align:center}
.tray{display:flex;align-items:center;padding-right:42px}
.tray svg:nth-child(2){margin-left:37px}
.tray svg:nth-child(3){margin-left:30px}
.tray svg:nth-child(4){margin-left:16px}
.tray svg:nth-child(5){margin-left:16px}
.clock{width:140px;text-align:right;color:#fff;font-size:23px;line-height:32px;margin:-5px 18px 0 0}
```
